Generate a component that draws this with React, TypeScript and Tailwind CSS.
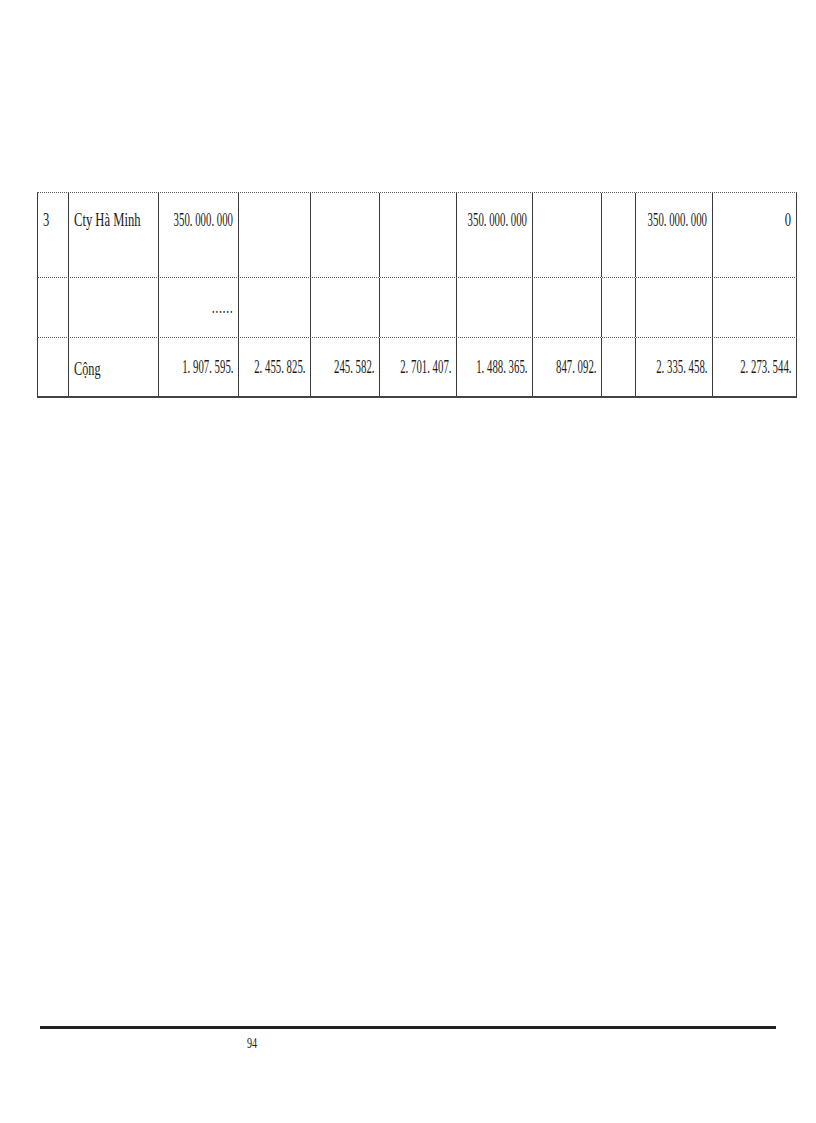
const cols = [32, 90, 80, 72, 69, 77, 76, 69, 34, 77, 84];

type Cell = { text?: string; align?: 'left' | 'right'; sx?: string; extra?: string };

const rows: { h: string; pt: string; cells: Cell[] }[] = [
  {
    h: 'h-[85px]',
    pt: 'pt-[17px]',
    cells: [
      { text: '3', align: 'left', sx: 'scale-x-[0.7]' },
      { text: 'Cty Hà Minh', align: 'left', sx: 'scale-x-[0.7]' },
      { text: '350. 000. 000', sx: 'scale-x-[0.6]' },
      {},
      {},
      {},
      { text: '350. 000. 000', sx: 'scale-x-[0.6]' },
      {},
      {},
      { text: '350. 000. 000', sx: 'scale-x-[0.6]' },
      { text: '0', sx: 'scale-x-[0.7]' },
    ],
  },
  {
    h: 'h-[60px]',
    pt: 'pt-[19px]',
    cells: [{}, {}, { text: '……', sx: 'scale-x-[0.6]' }, {}, {}, {}, {}, {}, {}, {}, {}],
  },
  {
    h: 'h-[59px]',
    pt: 'pt-[19px]',
    cells: [
      {},
      { text: 'Cộng', align: 'left', sx: 'scale-x-[0.68]', extra: 'mt-[2px]' },
      { text: '1. 907. 595.', sx: 'scale-x-[0.6]' },
      { text: '2. 455. 825.', sx: 'scale-x-[0.6]' },
      { text: '245. 582.', sx: 'scale-x-[0.6]' },
      { text: '2. 701. 407.', sx: 'scale-x-[0.6]' },
      { text: '1. 488. 365.', sx: 'scale-x-[0.6]' },
      { text: '847. 092.', sx: 'scale-x-[0.6]' },
      {},
      { text: '2. 335. 458.', sx: 'scale-x-[0.6]' },
      { text: '2. 273. 544.', sx: 'scale-x-[0.6]' },
    ],
  },
];

export default function App() {
  return (
    <div
      className="relative w-[816px] h-[1123px] bg-white text-[#1a1a1a] overflow-hidden"
      style={{ fontFamily: '"Liberation Serif", "DejaVu Serif", serif' }}
    >
      <div className="pt-[192px] pl-[37px]">
        <div className="w-[760px] border-b-2 border-b-[#444]">
          {rows.map((row, ri) => (
            <div key={ri} className={`flex border-t border-dotted border-t-[#555] ${row.h}`}>
              {row.cells.map((c, ci) => (
                <div
                  key={ci}
                  style={{ width: cols[ci] }}
                  className={`shrink-0 h-full flex items-start border-r border-r-[#3a3a3a] ${ci === 0 ? 'border-l border-l-[#3a3a3a]' : ''} ${row.pt} ${
                    c.align === 'left' ? 'pl-[5px] justify-start' : 'pr-[5px] justify-end'
                  }`}
                >
                  {c.text && (
                    <span
                      className={`shrink-0 whitespace-nowrap text-[18px] leading-[20px] ${c.sx} ${c.extra ?? ''} ${
                        c.align === 'left' ? 'origin-left' : 'origin-right'
                      }`}
                    >
                      {c.text}
                    </span>
                  )}
                </div>
              ))}
            </div>
          ))}
        </div>
      </div>

      <div className="absolute left-[40px] top-[1026px] w-[736px]">
        <div className="h-[3px] bg-[#222]" />
        <div className="pl-[207px] pt-[2px]">
          <span className="inline-block text-[15px] leading-[16px] scale-x-[0.68] origin-left">94</span>
        </div>
      </div>
    </div>
  );
}
